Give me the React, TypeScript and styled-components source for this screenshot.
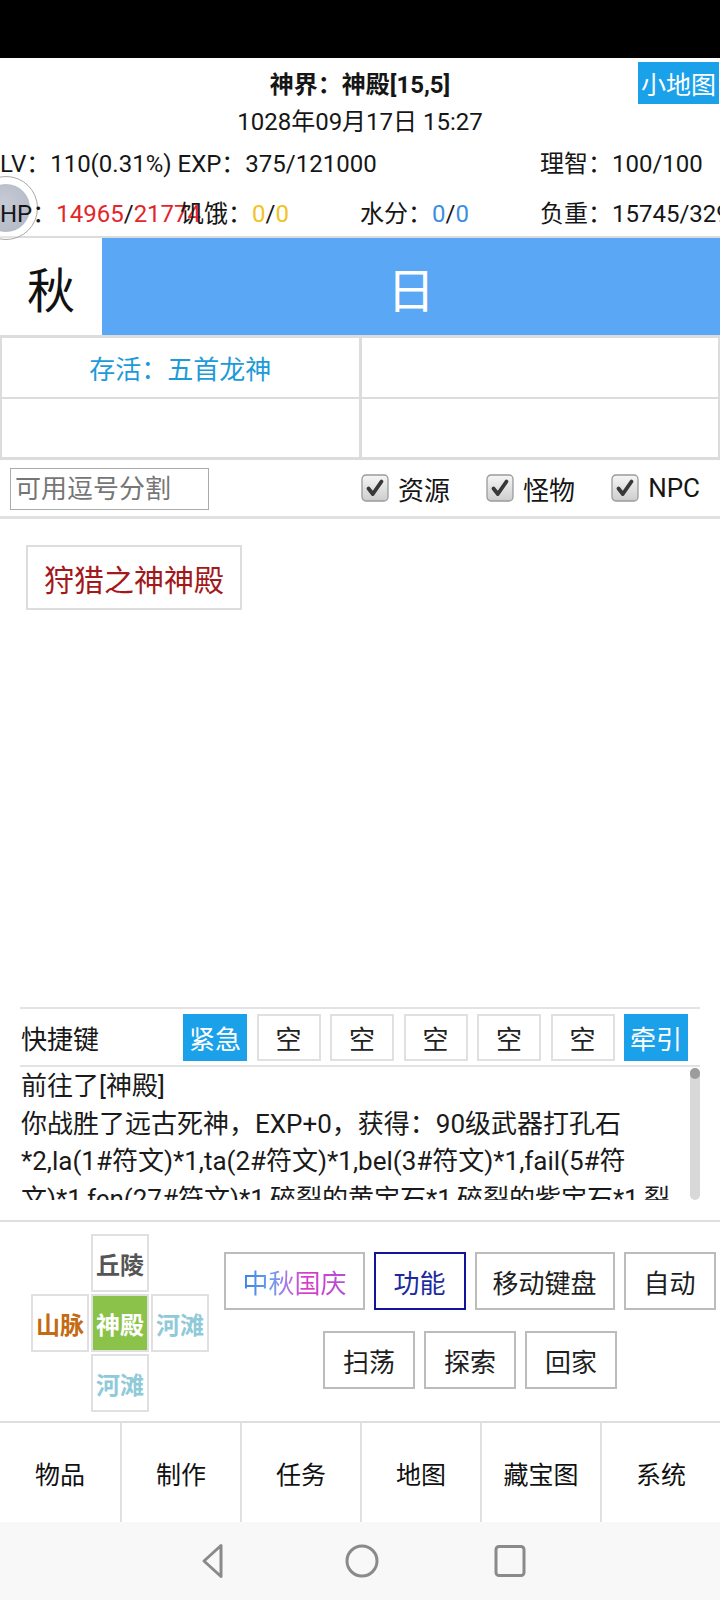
import React from "react";
import styled, { createGlobalStyle } from "styled-components";

const Global = createGlobalStyle`
  html, body { margin: 0; padding: 0; background: #fff; }
  body { font-family: Roboto, "Noto Sans CJK SC", sans-serif; }
  * { box-sizing: border-box; }
`;

const Screen = styled.div`
  width: 720px;
  height: 1600px;
  display: flex;
  flex-direction: column;
  overflow: hidden;
  position: relative;
  background: #fff;
  color: #161616;
  font-size: 24px;
`;

const StatusBar = styled.div`
  height: 58px;
  flex: none;
  background: #000;
`;

const Header = styled.header`
  position: relative;
  flex: none;
`;

const TitleRow = styled.div`
  display: grid;
  grid-template-columns: 1fr auto 1fr;
  align-items: center;
  height: 46px;
`;

const Title = styled.div`
  grid-column: 2;
  font-weight: bold;
  font-size: 24px;
  padding-top: 2px;
`;

const MiniMapButton = styled.div`
  grid-column: 3;
  justify-self: end;
  align-self: end;
  width: 81px;
  height: 42px;
  margin-right: 1px;
  background: #1ba1e9;
  color: #fff;
  font-size: 25px;
  display: flex;
  align-items: center;
  justify-content: center;
`;

const DateRow = styled.div`
  height: 36px;
  line-height: 36px;
  text-align: center;
`;

const StatsGrid = styled.div`
  position: relative;
  display: grid;
  grid-template-columns: repeat(4, 180px);
  grid-template-rows: 42px 54px;
  align-items: center;
`;

const Stat = styled.div<{ $span?: number; $down?: number }>`
  white-space: nowrap;
  grid-column: span ${(p) => p.$span ?? 1};
  padding-top: ${(p) => p.$down ?? 0}px;
`;

const Val = styled.span<{ $c: string }>`
  color: ${(p) => p.$c};
`;

const FloatBall = styled.div`
  position: absolute;
  left: -26px;
  top: 118px;
  width: 64px;
  height: 64px;
  border-radius: 50%;
  border: 1.5px solid #a9a9a9;
  background: rgba(255, 255, 255, 0.25);
  display: flex;
  align-items: center;
  justify-content: center;
  &::after {
    content: "";
    width: 48px;
    height: 48px;
    border-radius: 50%;
    background: radial-gradient(circle at 45% 40%, #b3bac8, #959dae);
    opacity: 0.75;
  }
`;

const SeasonRow = styled.div`
  flex: none;
  height: 99px;
  border-top: 2px solid #dcdcdc;
  display: grid;
  grid-template-columns: 102px 1fr;
`;

const SeasonCell = styled.div<{ $day?: boolean }>`
  display: flex;
  align-items: center;
  justify-content: center;
  font-size: 48px;
  background: ${(p) => (p.$day ? "#5aa7f6" : "#fff")};
  color: ${(p) => (p.$day ? "#fff" : "#111")};
`;

const InfoGrid = styled.div`
  flex: none;
  display: grid;
  grid-template-columns: 1fr 1fr;
  grid-template-rows: 59px 58px;
  gap: 2px 3px;
  padding: 3px 2px;
  background: #dcdcdc;
`;

const InfoCell = styled.div`
  background: #fff;
  display: flex;
  align-items: center;
  justify-content: center;
  color: #1d9bd8;
  font-size: 26px;
`;

const FilterRow = styled.div`
  flex: none;
  height: 59px;
  border-bottom: 3px solid #e0e0e0;
  display: flex;
  align-items: center;
  padding: 0 20px 0 10px;
`;

const FilterInput = styled.input`
  width: 199px;
  height: 42px;
  margin-top: 2px;
  border: 1px solid #ababab;
  padding: 0 4px;
  font: inherit;
  font-size: 26px;
  color: #333;
  outline: none;
  &::placeholder {
    color: #767676;
  }
`;

const Checks = styled.div`
  margin-left: auto;
  display: flex;
  gap: 36px;
`;

const CheckItem = styled.label`
  display: flex;
  align-items: center;
  gap: 9px;
  font-size: 26px;
  color: #161616;
`;

const Main = styled.main`
  flex: 1;
  padding: 26px 0 0 26px;
`;

const PlaceButton = styled.div`
  display: inline-flex;
  align-items: center;
  height: 65px;
  padding: 0 16px;
  border: 2px solid #dddddd;
  color: #a3191b;
  font-size: 30px;
`;

const QuickSection = styled.section`
  flex: none;
  margin: 0 20px;
  border-top: 2px solid #e3e3e3;
  padding-bottom: 20px;
`;

const KeyRow = styled.div`
  height: 58px;
  border-bottom: 2px solid #e3e3e3;
  display: flex;
  align-items: center;
  padding-left: 1px;
`;

const KeyLabel = styled.div`
  font-size: 26px;
`;

const KeyButtons = styled.div`
  margin-left: auto;
  margin-right: 12px;
  display: flex;
  gap: 9.5px;
`;

const KeyButton = styled.div<{ $active?: boolean }>`
  width: 64px;
  height: 47px;
  display: flex;
  align-items: center;
  justify-content: center;
  font-size: 26px;
  background: ${(p) => (p.$active ? "#1ba1e9" : "#fff")};
  color: ${(p) => (p.$active ? "#fff" : "#222")};
  border: 2px solid ${(p) => (p.$active ? "#1ba1e9" : "#e0e0e0")};
`;

const LogRow = styled.div`
  height: 133px;
  display: flex;
  padding-top: 1px;
`;

const LogText = styled.div`
  flex: 1;
  overflow: hidden;
  padding: 0 11px 0 1px;
  font-size: 26px;
  line-height: 37.5px;
  color: #1a1a1a;
`;

const ScrollTrack = styled.div`
  width: 10px;
  height: 132px;
  border-radius: 5px;
  background: #d8d8d8;
  &::before {
    content: "";
    display: block;
    height: 11px;
    border-radius: 5px;
    background: #9c9c9c;
  }
`;

const Controls = styled.section`
  flex: none;
  height: 201px;
  border-top: 2px solid #dedede;
  display: flex;
  padding: 12px 0 0 31px;
`;

const DPad = styled.div`
  display: grid;
  grid-template-columns: repeat(3, 58px);
  grid-template-rows: repeat(3, 58px);
  gap: 2px;
`;

const DCell = styled.div<{ $col: number; $row: number; $color: string; $bg?: string }>`
  grid-column: ${(p) => p.$col};
  grid-row: ${(p) => p.$row};
  border: 2px solid #e0e0e0;
  background: ${(p) => p.$bg ?? "#fff"};
  color: ${(p) => p.$color};
  font-weight: bold;
  font-size: 24px;
  display: flex;
  align-items: center;
  justify-content: center;
`;

const ActionArea = styled.div`
  width: 500px;
  margin-left: 11px;
  padding-top: 18px;
  display: flex;
  flex-direction: column;
  align-items: center;
  gap: 21px;
`;

const ActionRow = styled.div`
  display: flex;
  gap: 9px;
`;

const ActionButton = styled.div<{ $primary?: boolean }>`
  height: 58px;
  min-width: 92px;
  padding: 0 16px;
  display: flex;
  align-items: center;
  justify-content: center;
  font-size: 26px;
  background: #fff;
  color: ${(p) => (p.$primary ? "#1a2a9c" : "#1e1e1e")};
  border: 2px solid ${(p) => (p.$primary ? "#14149a" : "#bcbcbc")};
`;

const FestiveText = styled.span`
  background: linear-gradient(90deg, #3a7ee6 0%, #6aa0ee 28%, #b070e0 45%, #d83cc8 60%, #b050d8 100%);
  -webkit-background-clip: text;
  background-clip: text;
  color: transparent;
`;

const TabBar = styled.nav`
  flex: none;
  height: 101px;
  border-top: 2px solid #dedede;
  display: grid;
  grid-template-columns: repeat(6, 1fr);
`;

const Tab = styled.div`
  display: flex;
  align-items: center;
  justify-content: center;
  font-size: 25px;
  color: #111;
  & + & {
    border-left: 2px solid #e0e0e0;
  }
`;

const NavBar = styled.div`
  flex: none;
  height: 78px;
  background: #f8f8f8;
  display: flex;
  align-items: center;
  justify-content: center;
  gap: 108px;
  padding-left: 4px;
`;

const NavIcon = styled.svg`
  width: 40px;
  height: 40px;
  display: block;
`;

const CheckBox = () => (
  <svg width="28" height="28" viewBox="0 0 28 28">
    <defs>
      <linearGradient id="cbg" x1="0" y1="0" x2="0" y2="1">
        <stop offset="0" stopColor="#f6f6f6" />
        <stop offset="1" stopColor="#cdcdcd" />
      </linearGradient>
    </defs>
    <rect x="1" y="1" width="26" height="26" rx="4" fill="url(#cbg)" stroke="#9b9b9b" strokeWidth="1.3" />
    <path d="M7.5 14.5 L11.8 20 L20.5 7.5" fill="none" stroke="#383838" strokeWidth="3.8" strokeLinecap="round" strokeLinejoin="round" />
  </svg>
);

export default function App() {
  return (
    <>
      <Global />
      <Screen>
        <StatusBar />
        <Header>
          <FloatBall />
          <TitleRow>
            <Title>神界：神殿[15,5]</Title>
            <MiniMapButton>小地图</MiniMapButton>
          </TitleRow>
          <DateRow>1028年09月17日 15:27</DateRow>
          <StatsGrid>
            <Stat $span={3}>LV：110(0.31%) EXP：375/121000</Stat>
            <Stat>理智：100/100</Stat>
            <Stat $down={4}>
              HP：<Val $c="#e3262b">14965</Val>/<Val $c="#e3262b">21774</Val>
            </Stat>
            <Stat $down={4}>
              饥饿：<Val $c="#f2c21f">0</Val>/<Val $c="#f2c21f">0</Val>
            </Stat>
            <Stat $down={4}>
              水分：<Val $c="#3b8fde">0</Val>/<Val $c="#3b8fde">0</Val>
            </Stat>
            <Stat $down={4}>负重：15745/32900</Stat>
          </StatsGrid>
        </Header>

        <SeasonRow>
          <SeasonCell>秋</SeasonCell>
          <SeasonCell $day>日</SeasonCell>
        </SeasonRow>

        <InfoGrid>
          <InfoCell>存活：五首龙神</InfoCell>
          <InfoCell />
          <InfoCell />
          <InfoCell />
        </InfoGrid>

        <FilterRow>
          <FilterInput placeholder="可用逗号分割" />
          <Checks>
            <CheckItem>
              <CheckBox />
              资源
            </CheckItem>
            <CheckItem>
              <CheckBox />
              怪物
            </CheckItem>
            <CheckItem>
              <CheckBox />
              NPC
            </CheckItem>
          </Checks>
        </FilterRow>

        <Main>
          <PlaceButton>狩猎之神神殿</PlaceButton>
        </Main>

        <QuickSection>
          <KeyRow>
            <KeyLabel>快捷键</KeyLabel>
            <KeyButtons>
              <KeyButton $active>紧急</KeyButton>
              <KeyButton>空</KeyButton>
              <KeyButton>空</KeyButton>
              <KeyButton>空</KeyButton>
              <KeyButton>空</KeyButton>
              <KeyButton>空</KeyButton>
              <KeyButton $active>牵引</KeyButton>
            </KeyButtons>
          </KeyRow>
          <LogRow>
            <LogText>
              <div>前往了[神殿]</div>
              <div>
                你战胜了远古死神，EXP+0，获得：90级武器打孔石*2,la(1#符文)*1,ta(2#符文)*1,bel(3#符文)*1,fail(5#符文)*1,fen(27#符文)*1,碎裂的黄宝石*1,碎裂的紫宝石*1,裂纹的蓝宝石*1
              </div>
            </LogText>
            <ScrollTrack />
          </LogRow>
        </QuickSection>

        <Controls>
          <DPad>
            <DCell $col={2} $row={1} $color="#555">丘陵</DCell>
            <DCell $col={1} $row={2} $color="#c46a12">山脉</DCell>
            <DCell $col={2} $row={2} $color="#fff" $bg="#8bc34a">神殿</DCell>
            <DCell $col={3} $row={2} $color="#8fcad9">河滩</DCell>
            <DCell $col={2} $row={3} $color="#8fcad9">河滩</DCell>
          </DPad>
          <ActionArea>
            <ActionRow>
              <ActionButton>
                <FestiveText>中秋国庆</FestiveText>
              </ActionButton>
              <ActionButton $primary>功能</ActionButton>
              <ActionButton>移动键盘</ActionButton>
              <ActionButton>自动</ActionButton>
            </ActionRow>
            <ActionRow>
              <ActionButton>扫荡</ActionButton>
              <ActionButton>探索</ActionButton>
              <ActionButton>回家</ActionButton>
            </ActionRow>
          </ActionArea>
        </Controls>

        <TabBar>
          <Tab>物品</Tab>
          <Tab>制作</Tab>
          <Tab>任务</Tab>
          <Tab>地图</Tab>
          <Tab>藏宝图</Tab>
          <Tab>系统</Tab>
        </TabBar>

        <NavBar>
          <NavIcon viewBox="0 0 40 40">
            <path d="M27 4.5 L27 35.5 L10 20 Z" fill="none" stroke="#8a8a8a" strokeWidth="3" strokeLinejoin="round" />
          </NavIcon>
          <NavIcon viewBox="0 0 40 40">
            <circle cx="20" cy="20" r="15" fill="none" stroke="#8a8a8a" strokeWidth="3" />
          </NavIcon>
          <NavIcon viewBox="0 0 40 40">
            <rect x="6" y="5.5" width="28" height="29" rx="3" fill="none" stroke="#8a8a8a" strokeWidth="3" />
          </NavIcon>
        </NavBar>
      </Screen>
    </>
  );
}
